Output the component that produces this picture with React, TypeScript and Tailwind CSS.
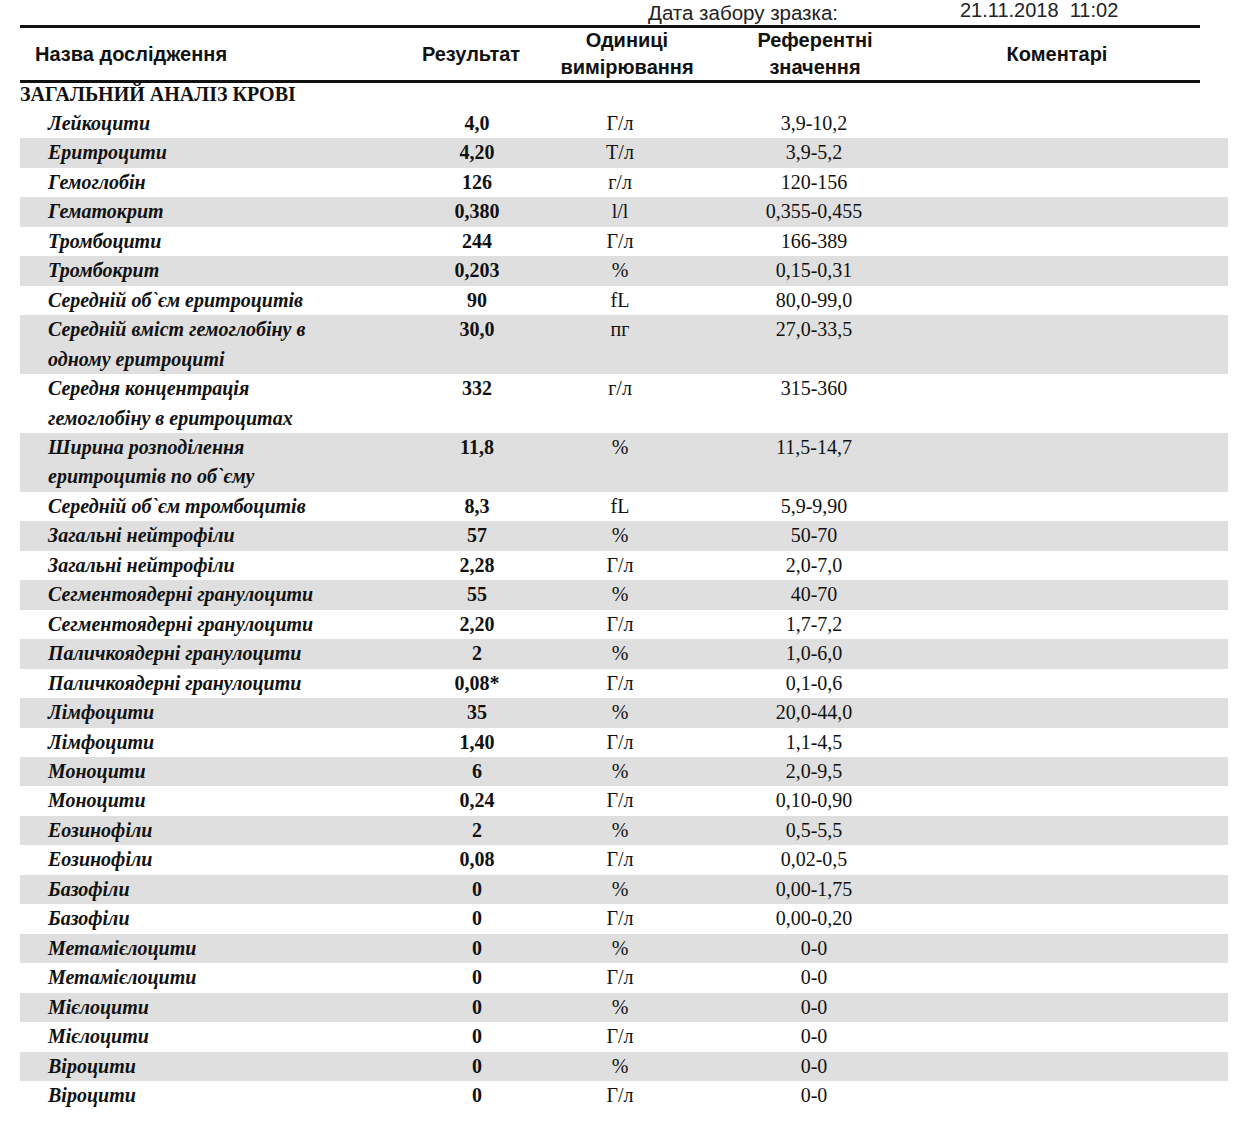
import React from "react";

type Row = { name: string[]; result: string; unit: string; ref: string };

const rows: Row[] = [
  { name: ["Лейкоцити"], result: "4,0", unit: "Г/л", ref: "3,9-10,2" },
  { name: ["Еритроцити"], result: "4,20", unit: "Т/л", ref: "3,9-5,2" },
  { name: ["Гемоглобін"], result: "126", unit: "г/л", ref: "120-156" },
  { name: ["Гематокрит"], result: "0,380", unit: "l/l", ref: "0,355-0,455" },
  { name: ["Тромбоцити"], result: "244", unit: "Г/л", ref: "166-389" },
  { name: ["Тромбокрит"], result: "0,203", unit: "%", ref: "0,15-0,31" },
  { name: ["Середній об`єм еритроцитів"], result: "90", unit: "fL", ref: "80,0-99,0" },
  { name: ["Середній вміст гемоглобіну в", "одному еритроциті"], result: "30,0", unit: "пг", ref: "27,0-33,5" },
  { name: ["Середня концентрація", "гемоглобіну в еритроцитах"], result: "332", unit: "г/л", ref: "315-360" },
  { name: ["Ширина розподілення", "еритроцитів по об`єму"], result: "11,8", unit: "%", ref: "11,5-14,7" },
  { name: ["Середній об`єм тромбоцитів"], result: "8,3", unit: "fL", ref: "5,9-9,90" },
  { name: ["Загальні нейтрофіли"], result: "57", unit: "%", ref: "50-70" },
  { name: ["Загальні нейтрофіли"], result: "2,28", unit: "Г/л", ref: "2,0-7,0" },
  { name: ["Сегментоядерні гранулоцити"], result: "55", unit: "%", ref: "40-70" },
  { name: ["Сегментоядерні гранулоцити"], result: "2,20", unit: "Г/л", ref: "1,7-7,2" },
  { name: ["Паличкоядерні гранулоцити"], result: "2", unit: "%", ref: "1,0-6,0" },
  { name: ["Паличкоядерні гранулоцити"], result: "0,08*", unit: "Г/л", ref: "0,1-0,6" },
  { name: ["Лімфоцити"], result: "35", unit: "%", ref: "20,0-44,0" },
  { name: ["Лімфоцити"], result: "1,40", unit: "Г/л", ref: "1,1-4,5" },
  { name: ["Моноцити"], result: "6", unit: "%", ref: "2,0-9,5" },
  { name: ["Моноцити"], result: "0,24", unit: "Г/л", ref: "0,10-0,90" },
  { name: ["Еозинофіли"], result: "2", unit: "%", ref: "0,5-5,5" },
  { name: ["Еозинофіли"], result: "0,08", unit: "Г/л", ref: "0,02-0,5" },
  { name: ["Базофіли"], result: "0", unit: "%", ref: "0,00-1,75" },
  { name: ["Базофіли"], result: "0", unit: "Г/л", ref: "0,00-0,20" },
  { name: ["Метамієлоцити"], result: "0", unit: "%", ref: "0-0" },
  { name: ["Метамієлоцити"], result: "0", unit: "Г/л", ref: "0-0" },
  { name: ["Мієлоцити"], result: "0", unit: "%", ref: "0-0" },
  { name: ["Мієлоцити"], result: "0", unit: "Г/л", ref: "0-0" },
  { name: ["Віроцити"], result: "0", unit: "%", ref: "0-0" },
  { name: ["Віроцити"], result: "0", unit: "Г/л", ref: "0-0" },
];

const serif = "font-['Liberation_Serif',serif]";
const sans = "font-['Liberation_Sans',Arial,sans-serif]";

export default function App() {
  return (
    <div className={`w-[1252px] h-[1122px] bg-white text-[#111] ${serif} overflow-hidden`}>
      {/* date line */}
      <div className={`flex h-[25px] ${sans} text-[20px] text-[#222]`}>
        <div className="w-[648px]" />
        <div className="w-[312px] pt-[2px] leading-[22px] text-[20.5px]">Дата забору зразка:</div>
        <div className="leading-[20px]">21.11.2018&nbsp;&nbsp;11:02</div>
      </div>
      {/* header */}
      <div className={`ml-[20px] w-[1180px] border-t-[3px] border-b-[3px] border-[#111] ${sans} font-bold text-[20px]`}>
        <div className="flex h-[52px] items-center">
          <div className="w-[400px] pl-[15px]">Назва дослідження</div>
          <div className="w-[102px] text-center">Результат</div>
          <div className="w-[210px] text-center leading-[27px]">
            Одиниці
            <br />
            вимірювання
          </div>
          <div className="w-[166px] text-center leading-[27px]">
            Референтні
            <br />
            значення
          </div>
          <div className="w-[302px] pl-[16px] text-center">Коментарі</div>
        </div>
      </div>
      {/* section */}
      <div className="ml-[20px] h-[26px] leading-[23px] text-[20px] font-bold">ЗАГАЛЬНИЙ АНАЛІЗ КРОВІ</div>
      {/* rows */}
      <div className="ml-[20px] w-[1208px] flex flex-col text-[20px]">
        {rows.map((r, i) => (
          <div key={i} className={`flex leading-[29.45px] ${i % 2 === 1 ? "bg-[#dfdfdf]" : "bg-white"}`}>
            <div className="w-[400px] pl-[28px] font-bold italic">
              {r.name.map((n, j) => (
                <div key={j}>{n}</div>
              ))}
            </div>
            <div className="w-[114px] text-center font-bold">{r.result}</div>
            <div className="w-[172px] text-center">{r.unit}</div>
            <div className="w-[216px] text-center">{r.ref}</div>
            <div className="flex-1" />
          </div>
        ))}
      </div>
    </div>
  );
}
